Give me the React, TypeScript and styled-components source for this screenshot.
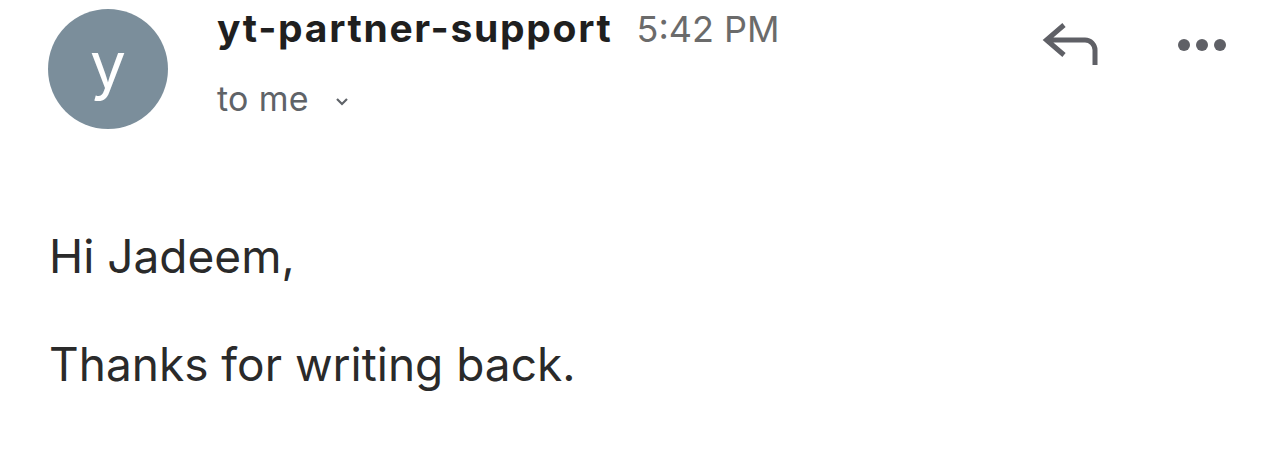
import React from "react";
import styled, { createGlobalStyle } from "styled-components";

const GlobalStyle = createGlobalStyle`
  html, body {
    margin: 0;
    padding: 0;
    background: #ffffff;
  }
  body {
    font-family: Inter, "Noto Sans", "Liberation Sans", sans-serif;
    -webkit-font-smoothing: antialiased;
  }
`;

const App = () => {
  return (
    <>
      <GlobalStyle />
      <Page>
        <Header>
          <Avatar>y</Avatar>

          <Meta>
            <NameRow>
              <Sender>yt-partner-support</Sender>
              <Time>5:42 PM</Time>
            </NameRow>
            <Recipient>
              to me
              <svg width="14" height="9" viewBox="0 0 14 9">
                <polyline
                  points="2,2 7,7 12,2"
                  fill="none"
                  stroke="#5f6368"
                  strokeWidth="2.2"
                />
              </svg>
            </Recipient>
          </Meta>

          <Actions>
            <IconButton aria-label="Reply">
              <svg width="56" height="44" viewBox="0 0 56 44">
                <path
                  d="M22 2 L4.5 17 L22 32 M4.5 17 H43 A10 10 0 0 1 53 27 V42"
                  fill="none"
                  stroke="#5f6066"
                  strokeWidth="5"
                  strokeLinejoin="miter"
                />
              </svg>
            </IconButton>
            <IconButton aria-label="More">
              <svg width="50" height="14" viewBox="0 0 50 14">
                <circle cx="7" cy="7" r="6" fill="#5f6066" />
                <circle cx="25" cy="7" r="6" fill="#5f6066" />
                <circle cx="43" cy="7" r="6" fill="#5f6066" />
              </svg>
            </IconButton>
          </Actions>
        </Header>

        <Body>
          <Paragraph>Hi Jadeem,</Paragraph>
          <Paragraph>Thanks for writing back.</Paragraph>
        </Body>
      </Page>
    </>
  );
};

export default App;

const Page = styled.div`
width: 1284px;
height: 449px;
overflow: hidden;
background: #ffffff;
`;

const Header = styled.div`
display: flex;
align-items: flex-start;
padding: 9px 57px 0 48px;
`;

const Avatar = styled.div`
width: 120px;
height: 120px;
border-radius: 50%;
background: #7b8e9b;
color: #ffffff;
font-size: 64px;
font-weight: 400;
line-height: 1;
display: flex;
justify-content: center;
align-items: center;
padding-bottom: 8px;
box-sizing: border-box;
flex-shrink: 0;
`;

const Meta = styled.div`
display: flex;
flex-direction: column;
margin-left: 49px;
`;

const NameRow = styled.div`
display: flex;
align-items: baseline;
gap: 24px;
`;

const Sender = styled.div`
font-size: 39px;
line-height: 38px;
font-weight: 700;
color: #1f1f1f;
letter-spacing: 1.7px;
`;

const Time = styled.div`
font-size: 36px;
line-height: 38px;
font-weight: 400;
color: #6b6b6b;
`;

const Recipient = styled.div`
display: flex;
align-items: center;
gap: 26px;
margin-top: 33px;
font-size: 34px;
line-height: 36px;
letter-spacing: 0.3px;
color: #5f6368;

svg {
  margin-top: 4px;
}
`;

const Actions = styled.div`
margin-left: auto;
margin-top: 14px;
display: flex;
align-items: center;
gap: 79px;
`;

const IconButton = styled.button`
border: none;
background: none;
padding: 0;
display: flex;
cursor: pointer;
`;

const Body = styled.div`
display: flex;
flex-direction: column;
gap: 52px;
margin-top: 99px;
padding-left: 49px;
`;

const Paragraph = styled.p`
margin: 0;
font-size: 46px;
line-height: 56px;
font-weight: 400;
color: #2a2a2a;
`;
